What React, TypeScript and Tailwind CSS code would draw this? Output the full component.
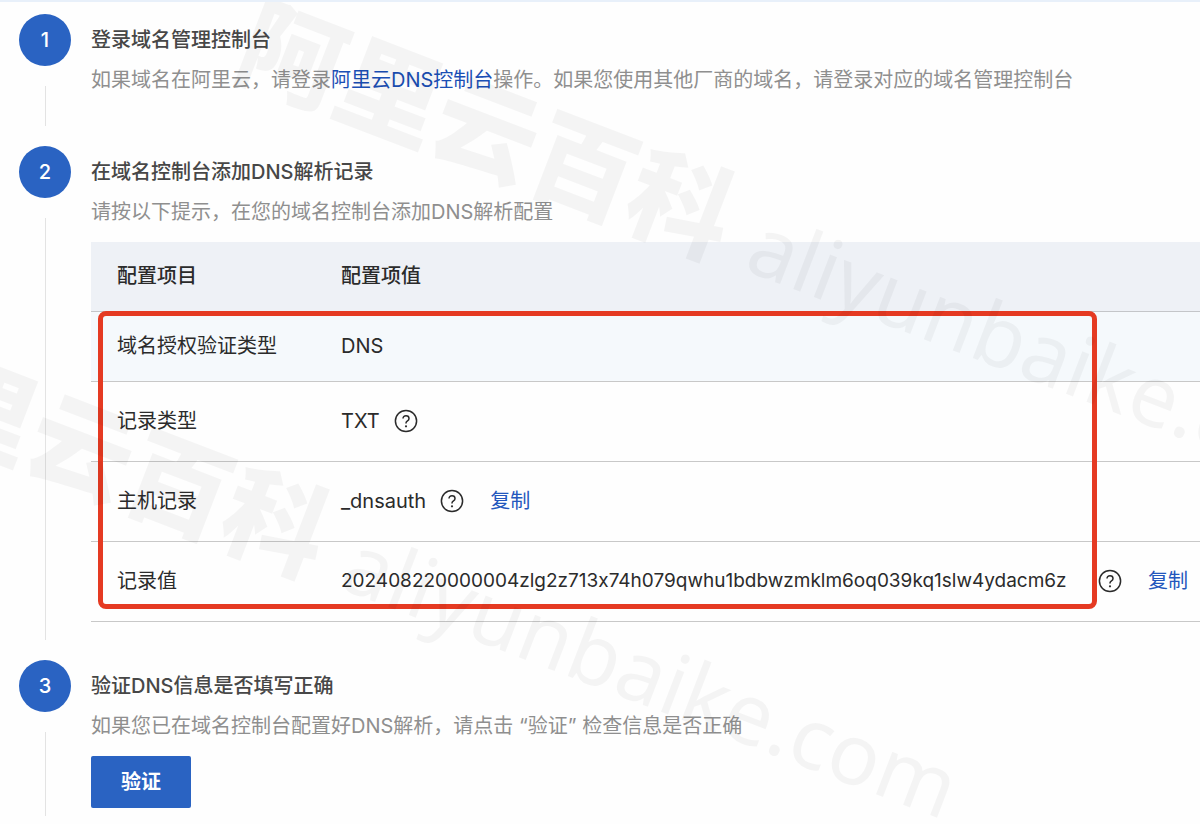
import clsx from "clsx";
import type { ReactNode } from "react";

type RecordRow = {
  label: string;
  value: string;
  hint?: boolean;
  copyable?: boolean;
  long?: boolean;
};

const rows: RecordRow[] = [
  { label: "域名授权验证类型", value: "DNS" },
  { label: "记录类型", value: "TXT", hint: true },
  { label: "主机记录", value: "_dnsauth", hint: true, copyable: true },
  {
    label: "记录值",
    value: "202408220000004zlg2z713x74h079qwhu1bdbwzmklm6oq039kq1slw4ydacm6z",
    hint: true,
    copyable: true,
    long: true,
  },
];

function HelpIcon() {
  return (
    <svg viewBox="0 0 24 24" className="size-6" fill="none" aria-hidden="true">
      <circle cx="12" cy="12" r="10.6" stroke="currentColor" strokeWidth="1.5" />
      <path
        d="M9 9.6c0-1.800 1.200-2.900 3-2.900s3 1.100 3 2.700c0 1.200-.6 1.800-1.500 2.400-1.100.7-1.500 1.200-1.500 2.200v.6"
        stroke="currentColor"
        strokeWidth="1.500"
      />
      <circle cx="12" cy="17.300" r="1.100" fill="currentColor" />
    </svg>
  );
}

function Step({
  index,
  title,
  description,
  last,
  children,
}: {
  index: number;
  title: string;
  description: ReactNode;
  last?: boolean;
  children?: ReactNode;
}) {
  return (
    <li className="flex gap-5">
      <div className="flex w-[52px] shrink-0 flex-col items-center">
        <span className="flex size-[52px] items-center justify-center rounded-full bg-[#2a63c2] text-xl font-medium text-white">
          {index}
        </span>
        <span className={clsx("mt-5 w-px flex-1 bg-[#e3e3e3]", last ? "mb-2" : "mb-5")} />
      </div>
      <div className={clsx("min-w-0 flex-1 pt-1.5", last ? "pb-4" : "pb-[38px]")}>
        <h2 className="text-xl/10 font-medium text-[#474747]">{title}</h2>
        <p className="mb-2 text-xl/10 text-[#8f8f8f]">{description}</p>
        {children}
      </div>
    </li>
  );
}

function RecordTable() {
  return (
    <div className="relative mt-2.5">
      <table className="w-full table-fixed border-collapse text-left text-xl/7 whitespace-nowrap text-[#2b2b2b]">
        <thead>
          <tr className="h-[69px] border-b border-[#c4c6c9] bg-[#eef1f6]">
            <th scope="col" className="w-[224px] pl-[26px] font-medium">
              配置项目
            </th>
            <th scope="col" className="pl-[26px] font-medium">
              配置项值
            </th>
          </tr>
        </thead>
        <tbody>
          {rows.map((row) => (
            <tr
              key={row.label}
              className={clsx(
                "border-b border-[#c8c8c8]",
                row.hint ? "h-20" : "h-[70px] bg-[#f5f9fc]",
              )}
            >
              <td className="pl-[26px]">{row.label}</td>
              <td className="pl-[26px]">
                <div className="flex items-center">
                  <span
                    className={clsx(
                      "[font-feature-settings:'calt'_0]",
                      row.long && "min-w-[743px] text-[19px]",
                    )}
                  >
                    {row.value}
                  </span>
                  {row.hint && (
                    <button type="button" aria-label={`${row.label}说明`} className="ml-3.5">
                      <HelpIcon />
                    </button>
                  )}
                  {row.copyable && (
                    <button type="button" className="ml-[26px] text-[#2357bd]">
                      复制
                    </button>
                  )}
                </div>
              </td>
            </tr>
          ))}
        </tbody>
      </table>
      <div className="pointer-events-none absolute top-[69px] left-[7px] h-[298px] w-[999px] rounded-lg border-5 border-[#e53a22]" />
    </div>
  );
}

function Watermark({ className }: { className: string }) {
  return (
    <div
      aria-hidden="true"
      className={clsx(
        "pointer-events-none absolute flex origin-left rotate-21 items-baseline gap-7 leading-none whitespace-nowrap text-black/4 select-none",
        className,
      )}
    >
      <span className="font-['Noto_Sans_CJK_SC',sans-serif] text-[104px] font-black">阿里云百科</span>
      <span className="font-['Noto_Sans',sans-serif] text-[85px]">aliyunbaike.com</span>
    </div>
  );
}

export default function App() {
  return (
    <main className="relative min-h-screen overflow-hidden border-t-2 border-[#e8f0fa] bg-[#fefefe] pt-3 pl-[19px] font-['Inter','Noto_Sans_CJK_SC',sans-serif]">
      <ol>
        <Step
          index={1}
          title="登录域名管理控制台"
          description={
            <>
              如果域名在阿里云，请登录
              <a href="#dns-console" className="text-[#1b4fb5]">
                阿里云DNS控制台
              </a>
              操作。如果您使用其他厂商的域名，请登录对应的域名管理控制台
            </>
          }
        />
        <Step
          index={2}
          title="在域名控制台添加DNS解析记录"
          description="请按以下提示，在您的域名控制台添加DNS解析配置"
        >
          <RecordTable />
        </Step>
        <Step
          index={3}
          title="验证DNS信息是否填写正确"
          description="如果您已在域名控制台配置好DNS解析，请点击 “验证” 检查信息是否正确"
          last
        >
          <button
            type="button"
            className="mt-0.5 h-[52px] rounded-xs bg-[#2a63c2] px-[30px] text-xl font-bold text-white"
          >
            验证
          </button>
        </Step>
      </ol>
      <Watermark className="top-[-23px] left-[246px]" />
      <Watermark className="top-[295px] left-[-159px]" />
    </main>
  );
}
